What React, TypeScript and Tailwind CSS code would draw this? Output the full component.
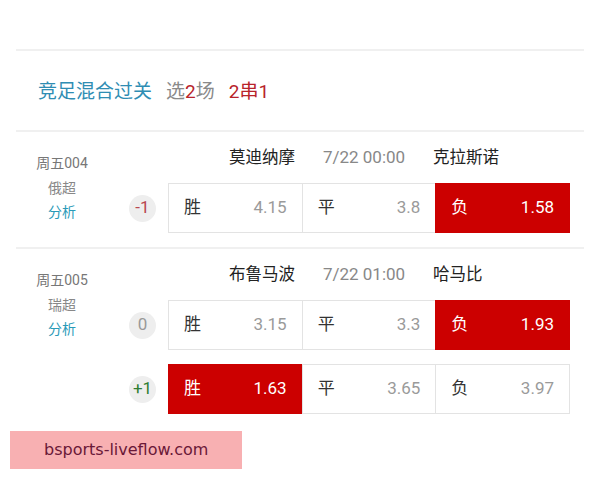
import React from "react";

type Odd = { label: string; value: string; sel?: boolean };
type Row = { hc: string; hcColor: string; odds: Odd[] };
type Match = { code: string; league: string; home: string; time: string; away: string; rows: Row[] };

const matches: Match[] = [
  {
    code: "周五004",
    league: "俄超",
    home: "莫迪纳摩",
    time: "7/22 00:00",
    away: "克拉斯诺",
    rows: [
      {
        hc: "-1",
        hcColor: "text-[#b9474f]",
        odds: [
          { label: "胜", value: "4.15" },
          { label: "平", value: "3.8" },
          { label: "负", value: "1.58", sel: true },
        ],
      },
    ],
  },
  {
    code: "周五005",
    league: "瑞超",
    home: "布鲁马波",
    time: "7/22 01:00",
    away: "哈马比",
    rows: [
      {
        hc: "0",
        hcColor: "text-[#999999]",
        odds: [
          { label: "胜", value: "3.15" },
          { label: "平", value: "3.3" },
          { label: "负", value: "1.93", sel: true },
        ],
      },
      {
        hc: "+1",
        hcColor: "text-[#2e7d32]",
        odds: [
          { label: "胜", value: "1.63", sel: true },
          { label: "平", value: "3.65" },
          { label: "负", value: "3.97" },
        ],
      },
    ],
  },
];

function OddCell({ o, first }: { o: Odd; first: boolean }) {
  return (
    <div
      className={
        "flex h-[50px] flex-1 items-center justify-between px-[15px] text-[17px] " +
        (o.sel
          ? "bg-[#cc0000] border border-[#cc0000] text-white"
          : "bg-white border border-[#e3e3e3] text-[#333333]") +
        (first ? "" : " -ml-px")
      }
    >
      <span>{o.label}</span>
      <span className={o.sel ? "text-white" : "text-[#9a9a9a]"}>{o.value}</span>
    </div>
  );
}

function MatchBlock({ m, last }: { m: Match; last: boolean }) {
  return (
    <div className={"flex pt-[14px] pb-[14px]" + (last ? "" : " border-b-2 border-[#f0f0f0]")}>
      <div className="flex w-[92px] flex-col items-center pt-[5px] text-[14px] leading-[24.5px]">
        <span className="text-[#777777]">{m.code}</span>
        <span className="text-[#888888]">{m.league}</span>
        <span className="text-[#2a9ab8]">分析</span>
      </div>
      <div className="flex flex-1 flex-col">
        <div className="ml-[58px] flex h-[24px] items-center text-[16.5px] text-[#222222]">
          <span className="w-[129px] text-right">{m.home}</span>
          <span className="w-[138px] text-center text-[17px] text-[#888888]">{m.time}</span>
          <span>{m.away}</span>
        </div>
        <div className="mt-[13px] flex flex-col gap-[14px]">
          {m.rows.map((r, i) => (
            <div key={i} className="flex items-center">
              <div className="ml-[21px] flex h-[27px] w-[27px] items-center justify-center rounded-full bg-[#eeeeee] text-[17px]">
                <span className={r.hcColor}>{r.hc}</span>
              </div>
              <div className="ml-[12px] flex w-[402px]">
                {r.odds.map((o, j) => (
                  <OddCell key={j} o={o} first={j === 0} />
                ))}
              </div>
            </div>
          ))}
        </div>
      </div>
    </div>
  );
}

export default function App() {
  return (
    <div
      className="relative h-[480px] w-[600px] overflow-hidden bg-white"
      style={{ fontFamily: 'Roboto, "Noto Sans CJK SC", sans-serif' }}
    >
      <div className="px-[16px] pt-[49px]">
        <div className="border-t-2 border-[#f0f0f0]" />
        <div className="flex h-[81px] items-center gap-[14px] border-b-2 border-[#f0f0f0] pl-[22px] pt-[3px] text-[19px]">
          <span className="text-[#2f8db3]">竞足混合过关</span>
          <span className="text-[#8a8a8a]">
            选<span className="text-[#b8232b]">2</span>场
          </span>
          <span className="text-[#b8232b]">2串1</span>
        </div>
        {matches.map((m, i) => (
          <MatchBlock key={i} m={m} last={i === matches.length - 1} />
        ))}
      </div>
      <div className="absolute left-[10px] top-[431px] flex h-[38px] w-[232px] items-center bg-[#f8b0b2] pl-[34px]">
        <span
          className="text-[16px] text-[#6a1838]"
          style={{ fontFamily: '"DejaVu Sans", sans-serif' }}
        >
          bsports-liveflow.com
        </span>
      </div>
    </div>
  );
}
